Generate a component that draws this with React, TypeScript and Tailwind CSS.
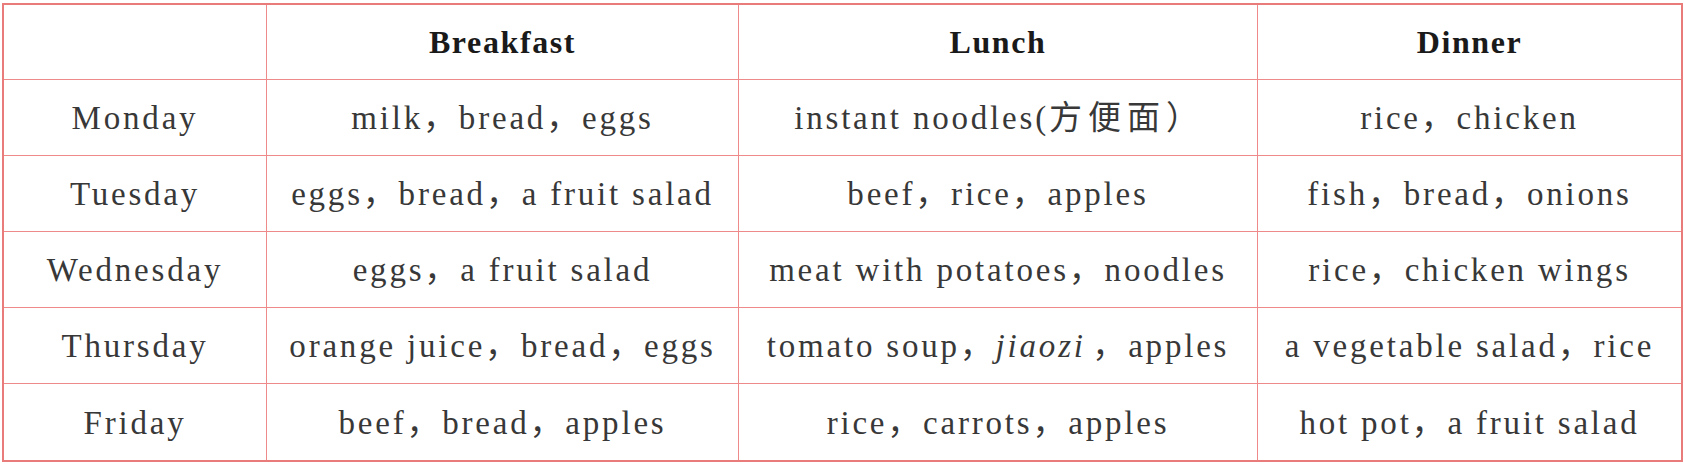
import React from "react";

const rows: { day: string; b: React.ReactNode; l: React.ReactNode; d: React.ReactNode }[] = [
  { day: "Monday", b: "milk，bread，eggs", l: <>instant noodles(<span className="tracking-[6px]">方便面</span>）</>, d: "rice，chicken" },
  { day: "Tuesday", b: "eggs，bread，a fruit salad", l: "beef，rice，apples", d: "fish，bread，onions" },
  { day: "Wednesday", b: "eggs，a fruit salad", l: "meat with potatoes，noodles", d: "rice，chicken wings" },
  {
    day: "Thursday",
    b: "orange juice，bread，eggs",
    l: (
      <>
        tomato soup，<span className="italic">jiaozi</span>
        <span className="tracking-normal">{"\u2009"}</span>，apples
      </>
    ),
    d: "a vegetable salad，rice",
  },
  { day: "Friday", b: "beef，bread，apples", l: "rice，carrots，apples", d: "hot pot，a fruit salad" },
];

const cell = "flex items-center justify-center border-[#ef8a8a] whitespace-nowrap";
const body = "h-[76px] text-[33px] tracking-[2.8px] pt-[3px] text-[#383838]";
const head = "h-[75px] font-bold text-[32px] tracking-[1.6px] text-[#1a1a1a]";

export default function App() {
  return (
    <div className="w-[1684px] h-[464px] bg-white pl-[2px] pt-[3px]">
      <div
        className="w-[1681px] border-2 border-[#ea7b7b] grid grid-cols-[263px_472px_519px_1fr]"
        style={{ fontFamily: '"Liberation Serif", "Noto Sans CJK SC", serif' }}
      >
        <div className={`${cell} ${head} border-r border-b`} />
        <div className={`${cell} ${head} border-r border-b`}>Breakfast</div>
        <div className={`${cell} ${head} border-r border-b`}>Lunch</div>
        <div className={`${cell} ${head} border-b`}>Dinner</div>
        {rows.map((r, i) => {
          const bb = i < rows.length - 1 ? "border-b" : "";
          return (
            <React.Fragment key={r.day}>
              <div className={`${cell} ${body} border-r ${bb}`}>{r.day}</div>
              <div className={`${cell} ${body} border-r ${bb}`}>{r.b}</div>
              <div className={`${cell} ${body} border-r ${bb}`}>{r.l}</div>
              <div className={`${cell} ${body} ${bb}`}>{r.d}</div>
            </React.Fragment>
          );
        })}
      </div>
    </div>
  );
}
